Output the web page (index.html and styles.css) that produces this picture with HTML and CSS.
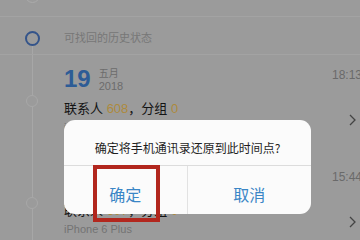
FILE: index.html
```html
<!DOCTYPE html>
<html lang="zh">
<head>
<meta charset="utf-8">
<link rel="stylesheet" href="styles.css">
</head>
<body>
<div class="screen">
  <div class="prev">
    <div class="rail"><span class="ring ring-faint"></span></div>
  </div>
  <div class="section">
    <div class="rail rail-section"><span class="ring"></span><span class="line grow"></span></div>
    <div class="section-title">可找回的历史状态</div>
  </div>
  <div class="entry">
    <div class="rail"><span class="line seg"></span><span class="node"></span><span class="line grow"></span></div>
    <div class="entry-body">
      <div class="entry-main">
        <div class="entry-head">
          <div class="day">19</div>
          <div class="month"><span>五月</span><span class="year">2018</span></div>
        </div>
        <div class="counts">联系人 <span class="num">608</span>，分组 <span class="num">0</span></div>
        <div class="device">iPhone 6 Plus</div>
      </div>
      <div class="entry-side">
        <div class="time">18:13</div>
        <svg class="chevron" width="7" height="12" viewBox="0 0 7 12"><polyline points="1,1 6,6 1,11" fill="none" stroke="#444" stroke-width="1.3"/></svg>
      </div>
    </div>
  </div>
  <div class="entry">
    <div class="rail"><span class="line seg"></span><span class="node"></span><span class="line grow"></span></div>
    <div class="entry-body">
      <div class="entry-main">
        <div class="entry-head">
          <div class="day">18</div>
          <div class="month"><span>五月</span><span class="year">2018</span></div>
        </div>
        <div class="counts">联系人 <span class="num">607</span>，分组 <span class="num">0</span></div>
        <div class="device">iPhone 6 Plus</div>
      </div>
      <div class="entry-side">
        <div class="time">15:44</div>
        <svg class="chevron" width="7" height="12" viewBox="0 0 7 12"><polyline points="1,1 6,6 1,11" fill="none" stroke="#444" stroke-width="1.3"/></svg>
      </div>
    </div>
  </div>
</div>
<div class="alert">
  <div class="alert-title">确定将手机通讯录还原到此时间点?</div>
  <div class="alert-actions">
    <div class="alert-btn">确定</div>
    <div class="alert-btn">取消</div>
  </div>
</div>
<div class="highlight"></div>
</body>
</html>
```
FILE: styles.css
```css
html, body {
  margin: 0;
  padding: 0;
}
body {
  width: 360px;
  height: 240px;
  overflow: hidden;
  position: relative;
  background: #9b9b9b;
  font-family: "Liberation Sans", "Noto Sans CJK SC", sans-serif;
}
.screen {
  width: 364px;
  background: #9b9b9b;
}
.rail {
  width: 64px;
  flex: none;
  display: flex;
  flex-direction: column;
  align-items: center;
}
.line {
  width: 1px;
  background: #a7a7a7;
}
.line.grow { flex: 1; }
.line.seg { height: 40px; }
.ring {
  width: 15px;
  height: 15px;
  box-sizing: border-box;
  border: 2px solid #34548a;
  border-radius: 50%;
  flex: none;
}
.ring-faint {
  border: 1px solid #ababab;
  margin-top: -12px;
}
.node {
  width: 12px;
  height: 12px;
  box-sizing: border-box;
  border: 1px solid #a8a8a8;
  border-radius: 50%;
  flex: none;
}
.prev {
  height: 16px;
  display: flex;
  overflow: hidden;
}
.section {
  display: flex;
  height: 39px;
  box-sizing: border-box;
  border-top: 1px solid #a3a3a3;
  border-bottom: 1px solid #a3a3a3;
}
.rail-section {
  padding-top: 14px;
}
.section-title {
  padding-top: 13px;
  line-height: 16px;
  font-size: 11px;
  color: #777;
}
.entry {
  display: flex;
  height: 102px;
}
.entry-body {
  flex: 1;
  display: flex;
}
.entry-main {
  flex: 1;
  padding-top: 12px;
}
.entry-head {
  display: flex;
  align-items: flex-start;
}
.day {
  font-size: 24px;
  line-height: 23px;
  font-weight: bold;
  color: #2d5c96;
}
.month {
  margin-left: 8px;
  padding-top: 1px;
  display: flex;
  flex-direction: column;
  font-size: 10px;
  line-height: 12px;
  color: #6c6c6c;
}
.month .year {
  font-size: 11px;
  line-height: 13px;
}
.counts {
  margin-top: 7px;
  font-size: 13px;
  line-height: 18px;
  color: #141414;
}
.num {
  color: #ad8a3d;
}
.device {
  font-size: 11px;
  line-height: 18px;
  color: #737373;
}
.entry-side {
  display: flex;
  flex-direction: column;
  align-items: flex-end;
  padding-top: 12px;
  padding-right: 2px;
}
.time {
  font-size: 12px;
  line-height: 16px;
  color: #6a6a6a;
}
.chevron {
  display: block;
  margin-top: 31px;
  margin-right: 6px;
}
.alert {
  position: absolute;
  left: 64px;
  top: 120px;
  width: 247px;
  background: #fbfbfb;
  border-radius: 11px;
  overflow: hidden;
  font-family: "Noto Sans CJK SC", sans-serif;
}
.alert-title {
  padding: 19px 10px 8px;
  font-size: 12px;
  line-height: 18px;
  color: #1e1e1e;
  text-align: center;
  border-bottom: 1px solid #dcdcdc;
}
.alert-actions {
  display: grid;
  grid-template-columns: 1fr 1fr;
  height: 48px;
}
.alert-btn {
  padding-top: 18px;
  line-height: 20px;
  font-size: 16px;
  color: #3a86c6;
  text-align: center;
}
.alert-btn:first-child {
  border-right: 1px solid #e2e2e2;
}
.highlight {
  position: absolute;
  left: 93px;
  top: 165px;
  width: 67px;
  height: 57px;
  box-sizing: border-box;
  border: 4px solid #b2271e;
}
```
